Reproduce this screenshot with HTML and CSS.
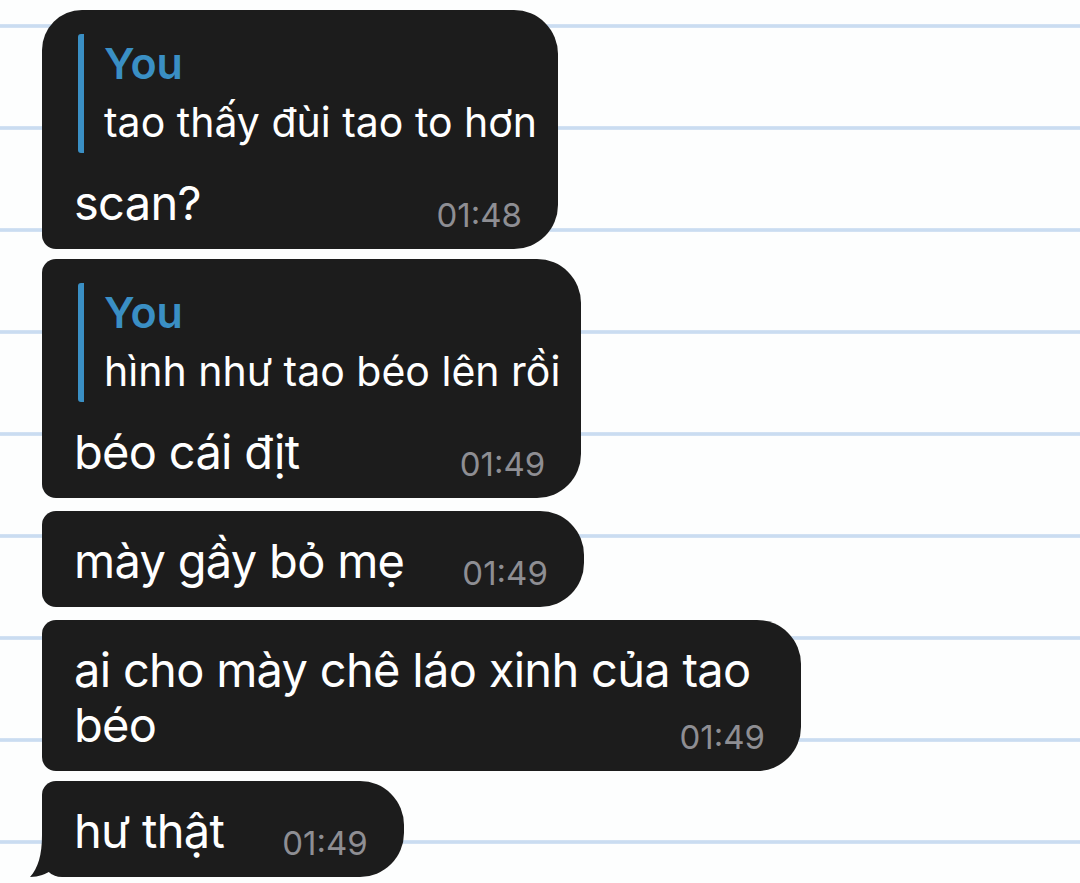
FILE: index.html
```html
<!DOCTYPE html>
<html lang="vi">
<head>
    <meta charset="UTF-8">
    <meta name="viewport" content="width=device-width, initial-scale=1.0">
    <title>Chat</title>
    <link rel="stylesheet" href="styles.css">
</head>
<body>
    <div class="chat">
        <div class="bubble first quoted">
            <div class="reply">
                <div class="reply-name">You</div>
                <div class="reply-text">tao thấy đùi tao to hơn</div>
            </div>
            <p class="text">scan?<span class="time">01:48</span></p>
        </div>

        <div class="bubble quoted">
            <div class="reply">
                <div class="reply-name">You</div>
                <div class="reply-text">hình như tao béo lên rồi</div>
            </div>
            <p class="text">béo cái địt<span class="time">01:49</span></p>
        </div>

        <div class="bubble spaced">
            <p class="text">mày gầy bỏ mẹ<span class="time">01:49</span></p>
        </div>

        <div class="bubble spaced">
            <p class="text">ai cho mày chê láo xinh của tao béo<span class="time">01:49</span></p>
        </div>

        <div class="bubble last">
            <p class="text">hư thật<span class="time">01:49</span></p>
            <svg class="tail" width="26" height="42" viewBox="0 0 26 42">
                <path d="M12 0 C12 20 8 33 0 42 C9 42 16 39 22 35 L26 35 L26 0 Z" fill="#1c1c1c"/>
            </svg>
        </div>
    </div>
</body>
</html>
```

FILE: styles.css
```css
body {
    margin: 0;
    font-family: Inter, "Noto Sans", sans-serif;
    background-color: #fdfefe;
    background-image: repeating-linear-gradient(
        to bottom,
        transparent 0,
        transparent 24px,
        #d6e4f4 24px,
        #c6daf0 26px,
        #d6e4f4 28px,
        transparent 28px,
        transparent 102px
    );
    min-height: 883px;
}
.chat {
    display: flex;
    flex-direction: column;
    align-items: flex-start;
    gap: 10px;
    padding: 10px 0 0 42px;
}
.bubble {
    position: relative;
    display: flow-root;
    max-width: 759px;
    box-sizing: border-box;
    background-color: #1c1c1c;
    color: #fff;
    padding: 22px 36px 16px 32px;
    border-radius: 14px 44px 44px 14px;
}
.bubble.quoted {
    padding-top: 24px;
}
.bubble.spaced {
    margin-top: 3px;
}
.bubble.first {
    border-radius: 40px 44px 44px 14px;
}
.bubble.last {
    border-radius: 14px 44px 44px 20px;
}
.reply {
    border-left: 6px solid #3a8fc4;
    border-radius: 3px;
    padding-left: 20px;
    margin: 0 -15px 22px 4px;
}
.reply-name {
    color: #3a8fc4;
    font-weight: 600;
    font-size: 43px;
    line-height: 58px;
}
.reply-text {
    font-size: 41px;
    line-height: 61px;
    white-space: nowrap;
}
.text {
    margin: 0;
    font-size: 47px;
    line-height: 55px;
    letter-spacing: -0.7px;
}
.time {
    float: right;
    margin: 22px 0 0 58px;
    font-size: 33px;
    line-height: 36px;
    letter-spacing: 0;
    color: #8e8e93;
}
.tail {
    position: absolute;
    left: -12px;
    bottom: 0;
}
```
